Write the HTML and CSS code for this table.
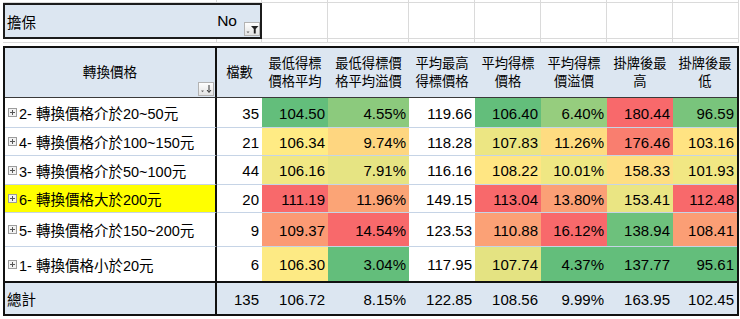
FILE: index.html
```html
<!DOCTYPE html>
<html lang="zh-Hant">
<head>
<meta charset="utf-8">
<title>轉換價格樞紐分析</title>
<link rel="stylesheet" href="styles.css">
</head>
<body>
<div class="sheet">
  <div class="gridrow strip">
    <div class="g"></div><div class="g"></div><div class="g"></div><div class="g"></div><div class="g"></div><div class="g"></div><div class="g"></div><div class="g"></div><div class="g"></div>
  </div>
  <div class="gridrow filterrow">
    <div class="filterbox">
      <span class="flabel">擔保</span>
      <span class="fvalue">No</span>
      <span class="fbtn">
        <svg width="16" height="14" viewBox="0 0 16 14"><defs><linearGradient id="bgf" x1="0" y1="0" x2="0" y2="1"><stop offset="0" stop-color="#ffffff"/><stop offset="1" stop-color="#e2e2e2"/></linearGradient></defs><rect x="0.5" y="0.5" width="15" height="13" fill="url(#bgf)" stroke="#b3b3b3"/><path d="M2.5 9.5h3l-1.5 1.8z" fill="#666"/><path d="M7 4h7.5l-2.8 3v4.5h-1.9V7z" fill="#222"/></svg>
      </span>
    </div>
    <div class="g"></div><div class="g"></div><div class="g"></div><div class="g"></div><div class="g"></div><div class="g"></div><div class="g"></div>
  </div>
  <div class="gridrow gaprow">
    <div class="g"></div><div class="g"></div><div class="g"></div><div class="g"></div><div class="g"></div><div class="g"></div><div class="g"></div><div class="g"></div><div class="g"></div>
  </div>

  <div class="pivot">
    <div class="c hd hd-a">轉換價格
      <span class="sortbtn">
        <svg width="16" height="14" viewBox="0 0 16 14"><defs><linearGradient id="bgs" x1="0" y1="0" x2="0" y2="1"><stop offset="0" stop-color="#ffffff"/><stop offset="1" stop-color="#e2e2e2"/></linearGradient></defs><rect x="0.5" y="0.5" width="15" height="13" fill="url(#bgs)" stroke="#b3b3b3"/><path d="M3 8.5h3l-1.5 1.8z" fill="#666"/><path d="M11 3v7" stroke="#333" stroke-width="1"/><path d="M9 8l2 2.5 2-2.5" fill="none" stroke="#333" stroke-width="1"/></svg>
      </span>
    </div>
    <div class="c hd">檔數</div>
    <div class="c hd">最低得標<br>價格平均</div>
    <div class="c hd">最低得標價<br>格平均溢價</div>
    <div class="c hd">平均最高<br>得標價格</div>
    <div class="c hd">平均得標<br>價格</div>
    <div class="c hd">平均得標<br>價溢價</div>
    <div class="c hd">掛牌後最<br>高</div>
    <div class="c hd">掛牌後最<br>低</div>

    <div class="c lbl"><span class="pbox"><svg width="9" height="9" viewBox="0 0 9 9"><rect x="0.5" y="0.5" width="8" height="8" fill="#f2f2f2" stroke="#9c9c9c"/><path d="M2 4.5h5M4.5 2v5" stroke="#555"/></svg></span>2- 轉換價格介於20~50元</div>
    <div class="c n">35</div>
    <div class="c n" style="background:#63be7b">104.50</div>
    <div class="c n" style="background:#8cca7d">4.55%</div>
    <div class="c n">119.66</div>
    <div class="c n" style="background:#63be7b">106.40</div>
    <div class="c n" style="background:#96cd7e">6.40%</div>
    <div class="c n" style="background:#f8696b">180.44</div>
    <div class="c n" style="background:#79c47c">96.59</div>

    <div class="c lbl"><span class="pbox"><svg width="9" height="9" viewBox="0 0 9 9"><rect x="0.5" y="0.5" width="8" height="8" fill="#f2f2f2" stroke="#9c9c9c"/><path d="M2 4.5h5M4.5 2v5" stroke="#555"/></svg></span>4- 轉換價格介於100~150元</div>
    <div class="c n">21</div>
    <div class="c n" style="background:#ffeb84">106.34</div>
    <div class="c n" style="background:#fed680">9.74%</div>
    <div class="c n">118.28</div>
    <div class="c n" style="background:#ece683">107.83</div>
    <div class="c n" style="background:#fedc81">11.26%</div>
    <div class="c n" style="background:#f97e6f">176.46</div>
    <div class="c n" style="background:#ffe382">103.16</div>

    <div class="c lbl"><span class="pbox"><svg width="9" height="9" viewBox="0 0 9 9"><rect x="0.5" y="0.5" width="8" height="8" fill="#f2f2f2" stroke="#9c9c9c"/><path d="M2 4.5h5M4.5 2v5" stroke="#555"/></svg></span>3- 轉換價格介於50~100元</div>
    <div class="c n">44</div>
    <div class="c n" style="background:#f1e783">106.16</div>
    <div class="c n" style="background:#e6e483">7.91%</div>
    <div class="c n">116.16</div>
    <div class="c n" style="background:#ffe683">108.22</div>
    <div class="c n" style="background:#efe783">10.01%</div>
    <div class="c n" style="background:#fede82">158.33</div>
    <div class="c n" style="background:#f1e783">101.93</div>

    <div class="c lbl hl"><span class="pbox"><svg width="9" height="9" viewBox="0 0 9 9"><rect x="0.5" y="0.5" width="8" height="8" fill="#f2f2f2" stroke="#9c9c9c"/><path d="M2 4.5h5M4.5 2v5" stroke="#555"/></svg></span>6- 轉換價格大於200元</div>
    <div class="c n">20</div>
    <div class="c n" style="background:#f8696b">111.19</div>
    <div class="c n" style="background:#fba476">11.96%</div>
    <div class="c n">149.15</div>
    <div class="c n" style="background:#f8696b">113.04</div>
    <div class="c n" style="background:#fba076">13.80%</div>
    <div class="c n" style="background:#eae583">153.41</div>
    <div class="c n" style="background:#f8696b">112.48</div>

    <div class="c lbl"><span class="pbox"><svg width="9" height="9" viewBox="0 0 9 9"><rect x="0.5" y="0.5" width="8" height="8" fill="#f2f2f2" stroke="#9c9c9c"/><path d="M2 4.5h5M4.5 2v5" stroke="#555"/></svg></span>5- 轉換價格介於150~200元</div>
    <div class="c n">9</div>
    <div class="c n" style="background:#fb9a74">109.37</div>
    <div class="c n" style="background:#f8696b">14.54%</div>
    <div class="c n">123.53</div>
    <div class="c n" style="background:#fba176">110.88</div>
    <div class="c n" style="background:#f8696b">16.12%</div>
    <div class="c n" style="background:#6dc17c">138.94</div>
    <div class="c n" style="background:#fb9e75">108.41</div>

    <div class="c lbl last"><span class="pbox"><svg width="9" height="9" viewBox="0 0 9 9"><rect x="0.5" y="0.5" width="8" height="8" fill="#f2f2f2" stroke="#9c9c9c"/><path d="M2 4.5h5M4.5 2v5" stroke="#555"/></svg></span>1- 轉換價格小於20元</div>
    <div class="c n last">6</div>
    <div class="c n last" style="background:#fdea84">106.30</div>
    <div class="c n last" style="background:#63be7b">3.04%</div>
    <div class="c n last">117.95</div>
    <div class="c n last" style="background:#e4e382">107.74</div>
    <div class="c n last" style="background:#63be7b">4.37%</div>
    <div class="c n last" style="background:#63be7b">137.77</div>
    <div class="c n last" style="background:#63be7b">95.61</div>

    <div class="c tot tot-a">總計</div>
    <div class="c tot n">135</div>
    <div class="c tot n">106.72</div>
    <div class="c tot n">8.15%</div>
    <div class="c tot n">122.85</div>
    <div class="c tot n">108.56</div>
    <div class="c tot n">9.99%</div>
    <div class="c tot n">163.95</div>
    <div class="c tot n">102.45</div>
  </div>
</div>
</body>
</html>
```

FILE: styles.css
```css
* {
  box-sizing: border-box;
}

html, body {
  margin: 0;
  padding: 0;
  background: #ffffff;
}

body {
  width: 740px;
  height: 319px;
  overflow: hidden;
  font-family: "Liberation Sans", "Noto Sans CJK TC", sans-serif;
  color: #000000;
}

.sheet {
  padding-left: 3px;
}

.gridrow {
  display: grid;
  grid-template-columns: 214px 45px 66px 81px 66px 66px 66px 66px 66px;
}

.g {
  border-right: 1px solid #dadada;
  border-bottom: 1px solid #dadada;
}

.strip {
  height: 3px;
}

.filterrow {
  height: 36px;
}

.gaprow {
  height: 4px;
}

.filterbox {
  grid-column: span 2;
  border: 2px solid #1c1c1c;
  background: #dce6f1;
  display: flex;
  align-items: center;
  padding: 0 0 0 2px;
  position: relative;
}

.flabel {
  font-size: 14.5px;
  flex: 1;
}

.fvalue {
  font-size: 15.5px;
  margin-right: 7px;
}

.fbtn {
  display: flex;
  align-self: flex-end;
  margin-bottom: 1px;
  margin-right: 0;
}

.pivot {
  margin-top: 3px;
  width: 736px;
  border: 2px solid #111111;
  display: grid;
  grid-template-columns: 212px 45px 66px 81px 66px 66px 66px 66px 64px;
  grid-template-rows: 50px 30px 28px 29px 28px 34px 34px 33px;
}

.c {
  border-bottom: 1px solid #c6d4e6;
  display: flex;
  align-items: center;
  white-space: nowrap;
}

.c.last {
  border-bottom: none;
}

.hd {
  background: #dce6f1;
  justify-content: center;
  text-align: center;
  font-size: 13.3px;
  line-height: 18px;
  border-bottom: 1px solid #3a3a3a;
  padding-top: 1px;
}

.hd-a {
  position: relative;
  border-right: 2px solid #111111;
  font-size: 13.6px;
}

.sortbtn {
  position: absolute;
  right: 1px;
  bottom: 1px;
  display: flex;
}

.lbl {
  border-right: 2px solid #111111;
  font-size: 14.5px;
  padding-left: 3px;
}

.lbl.hl {
  background: #ffff00;
}

.pbox {
  display: flex;
  margin-right: 2px;
}

.n {
  justify-content: flex-end;
  padding-right: 3px;
  font-size: 15px;
  padding-top: 1px;
}

.tot {
  background: #dce6f1;
  border-top: 2px solid #111111;
  border-bottom: none;
}

.tot-a {
  border-right: 2px solid #111111;
  font-size: 14.5px;
  padding-left: 2px;
}
```
